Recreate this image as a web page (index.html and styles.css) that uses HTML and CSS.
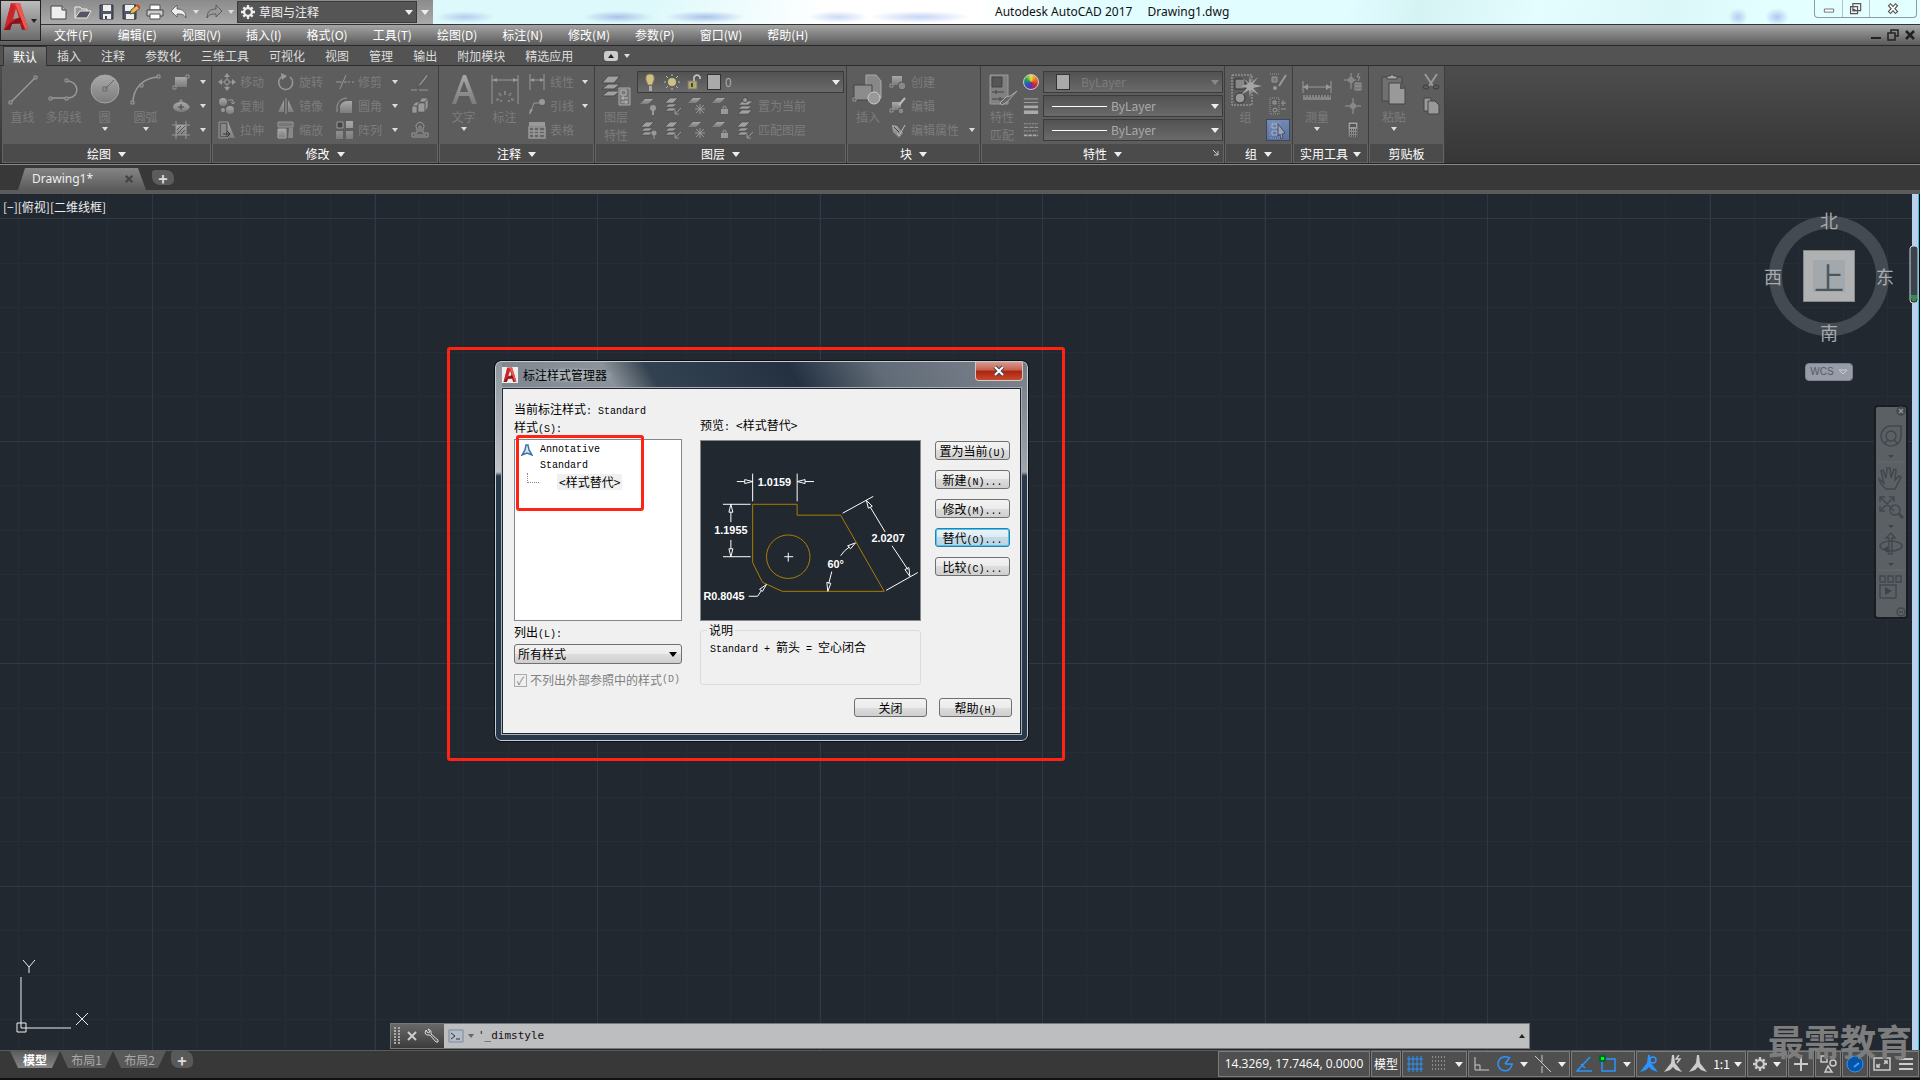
FILE: index.html
```html
<!DOCTYPE html>
<html lang="zh-CN">
  <head>
    <meta charset="UTF-8" />
    <meta name="viewport" content="width=device-width, initial-scale=1.0" />
    <title>Autodesk AutoCAD 2017 - Drawing1.dwg</title>
    <link rel="stylesheet" href="styles.css" />
  </head>
  <body>
    <!-- Icon sprite -->
    <svg class="sprite" aria-hidden="true">
      <defs>
        <linearGradient id="red" x1="0" y1="0" x2="1" y2="1">
          <stop offset="0" stop-color="#f0433f" />
          <stop offset="1" stop-color="#8f0f14" />
        </linearGradient>
        <linearGradient id="metal" x1="0" y1="0" x2="0" y2="1">
          <stop offset="0" stop-color="#a8a8a8" />
          <stop offset="1" stop-color="#7c7c7c" />
        </linearGradient>
      </defs>
      <symbol id="i-logo" viewBox="0 0 26 30">
        <path d="M1 28 8 1h9l8 26-6 1-2-6H9l-2 6zM10 17l6-1-3-9z" fill="url(#red)" fill-rule="evenodd" />
        <path d="m8 1 4 4-4 15-7 8z" fill="#c9252b" />
        <path d="m7 21 10-6 3 5-11 2-2 6-6 0z" fill="#8a1318" />
        <path d="m12 1 5 0 8 26-3 0z" fill="#ee5a50" />
      </symbol>
      <symbol id="i-new" viewBox="0 0 18 16">
        <path d="M1 2h11l4 4v9H1z" fill="#eee" stroke="#444" /><path d="M12 2v4h4" fill="#bbb" stroke="#444" />
      </symbol>
      <symbol id="i-open" viewBox="0 0 18 16">
        <path d="M1 14V3h5l2 2h5v3" fill="#999" stroke="#eee" /><path d="m1 14 5-7h11l-4 7z" fill="#556" stroke="#eee" />
      </symbol>
      <symbol id="i-save" viewBox="0 0 18 16">
        <path d="M2 1h13v14H2z" fill="#505766" stroke="#30343c" /><path d="M5 1h8v6H5zM5 10h8v5H5z" fill="#eee" /><path d="M7 12h2v3H7z" fill="#445" />
      </symbol>
      <symbol id="i-saveas" viewBox="0 0 18 16">
        <path d="M1 1h13v14H1z" fill="#505766" stroke="#30343c" /><path d="M3 1h9v6H3zM4 10h8v5H4z" fill="#eee" />
        <path d="m8 10 1-4 6-5 3 3-6 5z" fill="#e8b64a" stroke="#554" /><path d="m15 1 3 3" stroke="#d33" stroke-width="2" />
      </symbol>
      <symbol id="i-print" viewBox="0 0 18 16">
        <path d="M4 1h10v5H4z" fill="#fff" stroke="#555" /><path d="M1 6h16v6H1z" fill="#ccc" stroke="#444" /><path d="M4 10h10v5H4z" fill="#fff" stroke="#555" />
      </symbol>
      <symbol id="i-undo" viewBox="0 0 18 16">
        <path d="m1 7 6-6v4c6 0 9 3 9 9-2-4-5-4-9-4v3z" fill="currentColor" stroke="#444" stroke-width=".7" />
      </symbol>
      <symbol id="i-gear" viewBox="0 0 18 18">
        <circle cx="9" cy="9" r="5" fill="none" stroke="currentColor" stroke-width="3" />
        <path d="M9 0v4M9 14v4M0 9h4M14 9h4M3 3l2 2M13 13l2 2M15 3l-2 2M5 13l-2 2" stroke="currentColor" stroke-width="3" />
      </symbol>
      <symbol id="i-line" viewBox="0 0 32 32">
        <path d="M4 28 28 4" stroke="currentColor" stroke-width="1.5" /><path d="M2 27h3v3H2zM27 2h3v3h-3z" fill="#666" stroke="currentColor" />
      </symbol>
      <symbol id="i-pline" viewBox="0 0 32 32">
        <path d="M3 24h17c13-1 11-17-1-17" fill="none" stroke="currentColor" stroke-width="1.5" />
        <path d="M1 23h3v3H1zM17 5h3v3h-3zM17 23h3v3h-3z" fill="#666" stroke="currentColor" />
      </symbol>
      <symbol id="i-circle" viewBox="0 0 32 32">
        <circle cx="16" cy="15" r="14" fill="url(#metal)" stroke="#a6a6a6" /><path d="m16 15 9-9M14 13h4v4h-4z" fill="none" stroke="#666" />
      </symbol>
      <symbol id="i-arc" viewBox="0 0 32 32">
        <path d="M3 29C3 14 13 4 28 3" fill="none" stroke="currentColor" stroke-width="1.5" />
        <path d="M1 27h3v3H1zM10 10h3v3h-3zM27 1h3v3h-3z" fill="#666" stroke="currentColor" />
      </symbol>
      <symbol id="i-rect" viewBox="0 0 18 18">
        <path d="M3 4h12v10H3z" fill="url(#metal)" /><path d="M1 13h3v3H1zM14 2h3v3h-3z" fill="#555" stroke="currentColor" />
      </symbol>
      <symbol id="i-ellipse" viewBox="0 0 18 18">
        <ellipse cx="9" cy="10" rx="8" ry="5" fill="url(#metal)" /><path d="M9 7v6M6 10h6" stroke="#444" /><path d="M8 3h2v2H8zM15 9h2v2h-2z" fill="none" stroke="currentColor" />
      </symbol>
      <symbol id="i-hatch" viewBox="0 0 18 18">
        <path d="M4 4h10v10H4z" fill="url(#metal)" /><path d="M4 0v18M14 0v18M0 4h18M0 14h18" stroke="currentColor" fill="none" />
        <path d="m5 13 8-8M5 9l4-4M9 13l4-4" stroke="#555" />
      </symbol>
      <symbol id="i-move" viewBox="0 0 18 18">
        <path d="m9 0 3 4H6zM9 18l3-4H6zM0 9l4-3v6zM18 9l-4-3v6z" fill="currentColor" /><path d="M9 3v12M3 9h12" stroke="currentColor" /><path d="M7 7h4v4H7z" fill="#555" stroke="currentColor" />
      </symbol>
      <symbol id="i-rotate" viewBox="0 0 18 18">
        <path d="M6 3a7 7 0 1 0 7 1" fill="none" stroke="currentColor" stroke-width="1.5" /><path d="m4 0 6 3-5 4z" fill="currentColor" />
      </symbol>
      <symbol id="i-trim" viewBox="0 0 18 18">
        <path d="M0 9h6M8 9h3M12 9h2M16 9h2M4 16l6-14" fill="none" stroke="currentColor" />
      </symbol>
      <symbol id="i-copy2" viewBox="0 0 18 18">
        <circle cx="5" cy="5" r="4" fill="url(#metal)" /><circle cx="12" cy="13" r="4" fill="url(#metal)" /><circle cx="5" cy="13" r="2" fill="currentColor" /><path d="M10 3h5v4m-2-2 2 2 2-2" fill="none" stroke="currentColor" />
      </symbol>
      <symbol id="i-mirror" viewBox="0 0 18 18">
        <path d="M7 3v12H1zM11 3v12h6z" fill="url(#metal)" /><path d="M9 1v16" stroke="currentColor" />
      </symbol>
      <symbol id="i-fillet" viewBox="0 0 18 18">
        <path d="M4 16V9q2-5 8-5h4v12z" fill="url(#metal)" /><path d="M1 15V9q2-8 10-8" fill="none" stroke="currentColor" />
      </symbol>
      <symbol id="i-stretch" viewBox="0 0 18 18">
        <path d="M1 1h9v16H1z" fill="none" stroke="currentColor" /><path d="M10 1v16h7z" fill="url(#metal)" /><path d="M3 3h5v12H3z" fill="#888" /><path d="M5 13h7m-3-3 3 3-3 3" fill="none" stroke="#333" />
      </symbol>
      <symbol id="i-scale" viewBox="0 0 18 18">
        <path d="M1 1h15v5H1z" fill="#777" stroke="currentColor" /><path d="M1 8h8v9H1z" fill="url(#metal)" stroke="#aaa" /><path d="M12 7h4v10h-5" fill="#888" />
      </symbol>
      <symbol id="i-array" viewBox="0 0 18 18">
        <path d="M1 1h6v6H1z" fill="#444" stroke="currentColor" /><path d="M10 0h7v7h-7zM0 10h7v8H0zM10 10h7v8h-7z" fill="url(#metal)" />
      </symbol>
      <symbol id="i-brush" viewBox="0 0 18 18">
        <path d="m16 1-7 9-3 4 4-2 7-9z" fill="currentColor" stroke="#444" stroke-width=".6" /><path d="M0 17h6M8 17h9" stroke="currentColor" />
      </symbol>
      <symbol id="i-box" viewBox="0 0 18 18">
        <path d="M1 9h5v7H1zM1 9l4-4h5L6 9zM8 5l3-4h6l-3 4zM7 6h7v9H7zM14 5l3-4v9l-3 5z" fill="#999" stroke="#555" stroke-width=".6" />
      </symbol>
      <symbol id="i-offset" viewBox="0 0 18 18">
        <path d="M1 16h16v-4h-5V8a4 4 0 1 0-6 0v4H1z" fill="none" stroke="currentColor" /><path d="M3 14h12M8 11V6a1 1 0 1 1 2 0v5" fill="none" stroke="currentColor" />
      </symbol>
      <symbol id="i-text" viewBox="0 0 32 32">
        <path d="M4 30 15 1h3l11 29h-5l-3-8H11l-3 8zM12 18h8L16 7z" fill="url(#metal)" fill-rule="evenodd" />
      </symbol>
      <symbol id="i-dim" viewBox="0 0 32 32">
        <path d="M3 1v29M29 1v29M3 6h26" stroke="currentColor" fill="none" /><path d="m3 6 5-2v4zM29 6l-5-2v4z" fill="currentColor" />
        <path d="M16 17v4M10 19l2 3M22 19l-2 3M7 26l3-1M25 26l-3-1M12 28v-2M20 28v-2" stroke="#808080" stroke-width="2" />
      </symbol>
      <symbol id="i-linear" viewBox="0 0 18 18">
        <path d="M2 1v16M16 1v16M2 7h14" stroke="currentColor" /><path d="m2 7 4-2v4zM16 7l-4-2v4z" fill="currentColor" />
      </symbol>
      <symbol id="i-leader" viewBox="0 0 18 18">
        <circle cx="14" cy="5" r="3" fill="currentColor" /><path d="M2 17 6 6h5" fill="none" stroke="currentColor" /><path d="m1 17 1-5 3 1z" fill="currentColor" />
      </symbol>
      <symbol id="i-table" viewBox="0 0 18 18">
        <path d="M1 1h16v16H1z" fill="#666" /><path d="M1 1h16v4H1z" fill="currentColor" /><path d="M1 6h16v11H1zM6 6v11M11 6v11M1 10h16M1 13h16" fill="none" stroke="currentColor" stroke-width="1.5" />
      </symbol>
      <symbol id="i-layers" viewBox="0 0 32 32">
        <path d="m2 9 6-7h12l-6 7zM2 15l6-5h12l-6 5zM2 22l6-5h12l-6 5z" fill="#a0a0a0" stroke="#4a4a4a" />
        <path d="M19 14h11v17H19z" fill="#777" stroke="#aaa" /><path d="M21 16h5v5h-5zM21 24h7M21 28h7M23 22v4M26 26v4" fill="none" stroke="#bbb" />
      </symbol>
      <symbol id="i-lay" viewBox="0 0 18 18">
        <path d="m1 6 5-5h8L9 6zM1 10l4-3h8l-4 3zM1 14l4-3h8l-4 3z" fill="#a0a0a0" stroke="#4a4a4a" stroke-width=".6" /><circle cx="14" cy="12" r="2.500" fill="currentColor" /><path d="M14 14v4" stroke="currentColor" />
      </symbol>
      <symbol id="i-layset" viewBox="0 0 18 18">
        <path d="m2 8 5-4h10l-5 4zM2 12l4-3h10l-4 3zM2 17l4-4h10l-4 4z" fill="#a0a0a0" stroke="#4a4a4a" stroke-width=".6" /><circle cx="9" cy="3" r="2.500" fill="currentColor" stroke="#4a4a4a" />
      </symbol>
      <symbol id="i-lay1" viewBox="0 0 18 18">
        <path d="m0 7 5-5h8L8 7z" fill="url(#metal)" /><circle cx="13" cy="11" r="3" fill="currentColor" /><path d="M13 12v6" stroke="currentColor" stroke-width="2" />
      </symbol>
      <symbol id="i-lay2" viewBox="0 0 18 18">
        <path d="m1 6 5-5h8L9 6zM1 10l4-3h8l-4 3zM1 14l4-3h8l-4 3z" fill="#a0a0a0" stroke="#4a4a4a" stroke-width=".6" /><path d="m17 11-6 6m0-4v4h4" fill="none" stroke="currentColor" />
      </symbol>
      <symbol id="i-laysun" viewBox="0 0 18 18">
        <path d="m0 6 5-5h8L8 6z" fill="url(#metal)" /><path d="M12 7v10M7 12h10M8 8l8 8M16 8l-8 8" stroke="currentColor" />
      </symbol>
      <symbol id="i-laylock" viewBox="0 0 18 18">
        <path d="m0 6 5-5h8L8 6z" fill="url(#metal)" /><path d="M9 12h7v5H9z" fill="currentColor" /><path d="M11 12v-2q1-2 3 0v2" fill="none" stroke="currentColor" />
      </symbol>
      <symbol id="i-insert" viewBox="0 0 32 32">
        <path d="M14 1h10l5 6v17H14z" fill="#888" stroke="#aaa" /><path d="M2 11h18v15H2z" fill="#8c8c8c" stroke="#444" /><circle cx="22" cy="24" r="6" fill="#999" stroke="#ccc" /><path d="M1 24h3v3H1z" fill="#555" stroke="currentColor" />
      </symbol>
      <symbol id="i-create" viewBox="0 0 18 18">
        <path d="M3 3h10v9H3z" fill="url(#metal)" /><circle cx="13" cy="13" r="4" fill="#888" stroke="#555" /><path d="M1 11h3v3H1z" fill="#555" stroke="currentColor" />
      </symbol>
      <symbol id="i-bedit" viewBox="0 0 18 18">
        <path d="M3 5h9v8H3z" fill="url(#metal)" /><circle cx="12" cy="14" r="3" fill="#888" stroke="#555" /><path d="M1 12h3v3H1z" fill="#555" stroke="currentColor" /><path d="m10 8 6-7" stroke="#bbb" stroke-width="2" />
      </symbol>
      <symbol id="i-attr" viewBox="0 0 18 18">
        <path d="m3 4 5 1 6 7-4 5-6-6z" fill="url(#metal)" /><path d="m8 12 2 3 6-11" fill="none" stroke="#bbb" /><path d="m5 6 5 5" stroke="#444" />
      </symbol>
      <symbol id="i-match" viewBox="0 0 32 32">
        <path d="M4 1h18v29H4z" fill="#808080" stroke="#999" /><path d="M6 3h10v10H6z" fill="#555" stroke="#444" /><path d="M6 18h12M6 25h12M10 16v4M14 23v4" stroke="#444" /><path d="m31 17-9 10-6 4-2-2 6-6 4-1z" fill="#666" stroke="#aaa" />
      </symbol>
      <symbol id="i-weights" viewBox="0 0 18 18">
        <path d="M1 1h16M1 5h16" stroke="#aaa" /><path d="M1 10h16" stroke="#aaa" stroke-width="3" /><path d="M1 16h16" stroke="#aaa" stroke-width="4" />
      </symbol>
      <symbol id="i-types" viewBox="0 0 18 18">
        <path d="M1 2h16M1 10h16" stroke="#aaa" stroke-dasharray="2 1" /><path d="M1 6h16" stroke="#aaa" stroke-dasharray="5 1" /><path d="M1 15h16" stroke="#aaa" stroke-width="2" stroke-dasharray="4 1" />
      </symbol>
      <symbol id="i-group" viewBox="0 0 32 32">
        <path d="M2 1h20v30H2z" fill="none" stroke="#aaa" stroke-dasharray="2 1" /><path d="M5 5h10v10H5z" fill="#888" stroke="#333" /><circle cx="10" cy="24" r="5" fill="#999" stroke="#333" />
        <path d="m20 1 1 8 7-6-5 7 9 2-9 2 6 7-8-5-1 8-1-8-8 5 6-7-6-2 7-2-6-7 7 6z" fill="#a6a6a6" />
      </symbol>
      <symbol id="i-gedit" viewBox="0 0 18 18">
        <path d="M1 1h10" stroke="currentColor" stroke-dasharray="1 1" /><path d="M3 4h5v5H3z" fill="#777" stroke="currentColor" /><circle cx="6" cy="15" r="2" fill="currentColor" /><path d="M17 2 10 13" stroke="currentColor" stroke-width="2" />
      </symbol>
      <symbol id="i-gadd" viewBox="0 0 18 18">
        <path d="M1 1h9v16H1z" fill="none" stroke="currentColor" stroke-dasharray="1 1" /><path d="M4 4h3v3H4z" fill="#777" stroke="currentColor" /><circle cx="6" cy="13" r="2" fill="none" stroke="currentColor" /><path d="M12 6h5M14 3v6M12 12h5" stroke="currentColor" />
      </symbol>
      <symbol id="i-gsel" viewBox="0 0 18 18">
        <path d="M1 1h10v16H1z" fill="none" stroke="#8f9fbd" stroke-dasharray="1 1" /><path d="M3 3h5v4H3zM3 10h5v4H3z" fill="none" stroke="#a9b6ce" /><path d="m9 3 7 9-3 1 1 4-2 1-1-5-2 2z" fill="#99a4b8" stroke="#334" stroke-width=".7" />
      </symbol>
      <symbol id="i-measure" viewBox="0 0 32 32">
        <path d="M2 7v12M30 7v12M2 13h28" stroke="currentColor" /><path d="m2 13 5-3v6zM30 13l-5-3v6z" fill="currentColor" /><path d="M2 21h28v5H2z" fill="#858585" /><path d="M4 22h25" stroke="#555" stroke-width="2" stroke-dasharray="1 2" />
      </symbol>
      <symbol id="i-quick" viewBox="0 0 18 18">
        <path d="M7 0v16M0 7h12M5 5h4v4H5z" fill="#555" stroke="currentColor" /><path d="M11 10h6v7h-6zM13 10v7M15 10v7M11 13h6" fill="none" stroke="currentColor" /><path d="m15 0-2 4h3l-2 4" fill="none" stroke="currentColor" />
      </symbol>
      <symbol id="i-point" viewBox="0 0 18 18">
        <path d="M9 1v16M1 9h16M7 7h4v4H7z" fill="#555" stroke="currentColor" />
      </symbol>
      <symbol id="i-calc" viewBox="0 0 18 18">
        <path d="M4 1h10v16H4z" fill="url(#metal)" stroke="#555" /><path d="M6 3h6v3H6z" fill="#555" /><path d="M6 9h7M6 12h7M6 15h7" stroke="#444" stroke-width="1.500" stroke-dasharray="1 1" />
      </symbol>
      <symbol id="i-paste" viewBox="0 0 32 32">
        <path d="M4 3h20v24H4z" fill="#707070" stroke="#444" /><path d="M9 4V2h3q2-3 4 0h3v3H9z" fill="#aaa" stroke="#444" /><path d="M11 9h12l4 5v16H11z" fill="#999" stroke="#444" /><path d="M22 9v6h5z" fill="#555" />
      </symbol>
      <symbol id="i-cut" viewBox="0 0 18 18">
        <path d="m3 1 8 12M15 1 7 13" stroke="currentColor" stroke-width="2" /><ellipse cx="4" cy="14" rx="3" ry="2" fill="none" stroke="#3c3c3c" /><ellipse cx="14" cy="14" rx="3" ry="2" fill="none" stroke="#3c3c3c" />
      </symbol>
      <symbol id="i-copyclip" viewBox="0 0 18 18">
        <path d="M2 1h7v13H2z" fill="#999" stroke="#444" /><path d="M6 4h7l4 4v9H6z" fill="#999" stroke="#444" />
      </symbol>
      <symbol id="i-bulb" viewBox="0 0 18 18">
        <path d="M9 1q5 0 4 6l-2 5H7L5 7q-1-6 4-6" fill="#cfc088" stroke="#8a8259" /><path d="M8 13h3v5H8z" fill="#aaa" />
      </symbol>
      <symbol id="i-sun" viewBox="0 0 18 18">
        <circle cx="9" cy="9" r="4" fill="#cfc088" /><path d="M9 1v2M9 15v2M1 9h2M15 9h2M3 3l2 2M13 13l2 2M15 3l-2 2M5 13l-2 2" stroke="#bbb" />
      </symbol>
      <symbol id="i-unlock" viewBox="0 0 18 18">
        <path d="M3 8h9v8H3z" fill="#b5a969" stroke="#777" /><path d="M9 8V4q3-4 6 0v2" fill="none" stroke="#ccc" stroke-width="1.500" /><path d="M7 10v4" stroke="#444" stroke-width="2" />
      </symbol>
      <symbol id="i-annot" viewBox="0 0 18 18">
        <path d="M8 0h2l1 8 7 9-6-2-3-3-3 3-6 2 7-9z" fill="currentColor" />
      </symbol>
      <symbol id="i-win" viewBox="0 0 18 18">
        <path d="M5 2h10v9H5zM2 6h9v9H2z" fill="#f4f4f4" stroke="#555" stroke-width="1.500" /><path d="M5 9h3v3H5z" fill="#555" />
      </symbol>
      <symbol id="i-x" viewBox="0 0 12 12">
        <path d="m2 2 8 8M10 2l-8 8" stroke="currentColor" stroke-width="2.500" />
      </symbol>
    </svg>

    <header class="titlebar">
      <div class="quick-access">
        <button aria-label="新建"><svg><use href="#i-new" /></svg></button>
        <button aria-label="打开"><svg><use href="#i-open" /></svg></button>
        <button aria-label="保存"><svg><use href="#i-save" /></svg></button>
        <button aria-label="另存为"><svg><use href="#i-saveas" /></svg></button>
        <button aria-label="打印"><svg><use href="#i-print" /></svg></button>
        <button aria-label="放弃"><svg><use href="#i-undo" /></svg><i class="caret"></i></button>
        <button aria-label="重做" class="redo"><svg><use href="#i-undo" /></svg><i class="caret"></i></button>
        <div class="combo workspace">
          <svg><use href="#i-gear" /></svg>
          <select aria-label="工作空间"><option>草图与注释</option></select>
          <i class="caret big"></i>
        </div>
        <button class="qa-more" aria-label="自定义"><i class="caret big"></i></button>
      </div>
      <h1>Autodesk AutoCAD 2017 <span>Drawing1.dwg</span></h1>
      <div class="window-buttons">
        <button aria-label="最小化"><svg viewBox="0 0 18 18"><path d="M3 9h12v4H3z" fill="#fff" stroke="#555" /></svg></button>
        <button aria-label="还原"><svg><use href="#i-win" /></svg></button>
        <button aria-label="关闭"><svg viewBox="0 0 18 18"><path d="m4 3 10 11M14 3 4 14" stroke="#555" stroke-width="5" /><path d="m5 4 8 9M13 4 5 13" stroke="#fff" stroke-width="2" /></svg></button>
      </div>
    </header>
    <button class="app-button" aria-label="应用程序菜单"><svg><use href="#i-logo" /></svg><i class="caret"></i></button>

    <nav class="menubar">
      <button>文件(F)</button>
      <button>编辑(E)</button>
      <button>视图(V)</button>
      <button>插入(I)</button>
      <button>格式(O)</button>
      <button>工具(T)</button>
      <button>绘图(D)</button>
      <button>标注(N)</button>
      <button>修改(M)</button>
      <button>参数(P)</button>
      <button>窗口(W)</button>
      <button>帮助(H)</button>
      <div class="doc-buttons">
        <svg viewBox="0 0 12 12"><path d="M1 9h10" stroke="#222" stroke-width="2" /></svg>
        <svg viewBox="0 0 12 12"><path d="M4 4V1h7v6H8M1 4h7v7H1z" fill="none" stroke="#222" stroke-width="1.500" /></svg>
        <svg><use href="#i-x" /></svg>
      </div>
    </nav>

    <nav class="ribbon-tabs">
      <button class="active">默认</button>
      <button>插入</button>
      <button>注释</button>
      <button>参数化</button>
      <button>三维工具</button>
      <button>可视化</button>
      <button>视图</button>
      <button>管理</button>
      <button>输出</button>
      <button>附加模块</button>
      <button>精选应用</button>
      <button class="ribbon-toggle" aria-label="最小化功能区"><span><i class="caret up"></i></span><i class="caret"></i></button>
    </nav>

    <div class="ribbon">
      <section class="panel p-draw">
        <div class="panel-body">
          <button class="large"><svg><use href="#i-line" /></svg>直线</button>
          <button class="large"><svg><use href="#i-pline" /></svg>多段线</button>
          <button class="large"><svg><use href="#i-circle" /></svg>圆<i class="caret"></i></button>
          <button class="large"><svg><use href="#i-arc" /></svg>圆弧<i class="caret"></i></button>
          <div class="stack">
            <button aria-label="矩形"><svg><use href="#i-rect" /></svg><i class="caret"></i></button>
            <button aria-label="椭圆"><svg><use href="#i-ellipse" /></svg><i class="caret"></i></button>
            <button aria-label="图案填充"><svg><use href="#i-hatch" /></svg><i class="caret"></i></button>
          </div>
        </div>
        <h2>绘图<i class="caret big"></i></h2>
      </section>

      <section class="panel p-modify">
        <div class="panel-body">
          <div class="stack">
            <button><svg><use href="#i-move" /></svg>移动</button>
            <button><svg><use href="#i-copy2" /></svg>复制</button>
            <button><svg><use href="#i-stretch" /></svg>拉伸</button>
          </div>
          <div class="stack">
            <button><svg><use href="#i-rotate" /></svg>旋转</button>
            <button><svg><use href="#i-mirror" /></svg>镜像</button>
            <button><svg><use href="#i-scale" /></svg>缩放</button>
          </div>
          <div class="stack">
            <button><svg><use href="#i-trim" /></svg>修剪<i class="caret"></i></button>
            <button><svg><use href="#i-fillet" /></svg>圆角<i class="caret"></i></button>
            <button><svg><use href="#i-array" /></svg>阵列<i class="caret"></i></button>
          </div>
          <div class="stack">
            <button aria-label="删除"><svg><use href="#i-brush" /></svg></button>
            <button aria-label="分解"><svg><use href="#i-box" /></svg></button>
            <button aria-label="偏移"><svg><use href="#i-offset" /></svg></button>
          </div>
        </div>
        <h2>修改<i class="caret big"></i></h2>
      </section>

      <section class="panel p-annotate">
        <div class="panel-body">
          <button class="large"><svg><use href="#i-text" /></svg>文字<i class="caret"></i></button>
          <button class="large"><svg><use href="#i-dim" /></svg>标注</button>
          <div class="stack">
            <button><svg><use href="#i-linear" /></svg>线性<i class="caret"></i></button>
            <button><svg><use href="#i-leader" /></svg>引线<i class="caret"></i></button>
            <button><svg><use href="#i-table" /></svg>表格</button>
          </div>
        </div>
        <h2>注释<i class="caret big"></i></h2>
      </section>

      <section class="panel p-layer">
        <div class="panel-body">
          <button class="large"><svg><use href="#i-layers" /></svg><span>图层<br />特性</span></button>
          <div class="stack">
            <div class="combo">
              <svg><use href="#i-bulb" /></svg>
              <svg><use href="#i-sun" /></svg>
              <svg><use href="#i-unlock" /></svg>
              <span class="swatch"></span>
              <select aria-label="图层"><option>0</option></select>
              <i class="caret big"></i>
            </div>
            <div class="icon-row">
              <button aria-label="关"><svg><use href="#i-lay1" /></svg></button>
              <button aria-label="隔离"><svg><use href="#i-lay2" /></svg></button>
              <button aria-label="冻结"><svg><use href="#i-laysun" /></svg></button>
              <button aria-label="锁定"><svg><use href="#i-laylock" /></svg></button>
              <button><svg><use href="#i-layset" /></svg>置为当前</button>
            </div>
            <div class="icon-row">
              <button aria-label="打开所有图层"><svg><use href="#i-lay" /></svg></button>
              <button aria-label="取消隔离"><svg><use href="#i-lay2" /></svg></button>
              <button aria-label="解冻"><svg><use href="#i-laysun" /></svg></button>
              <button aria-label="解锁"><svg><use href="#i-laylock" /></svg></button>
              <button><svg><use href="#i-lay2" /></svg>匹配图层</button>
            </div>
          </div>
        </div>
        <h2>图层<i class="caret big"></i></h2>
      </section>

      <section class="panel p-block">
        <div class="panel-body">
          <button class="large"><svg><use href="#i-insert" /></svg>插入</button>
          <div class="stack">
            <button><svg><use href="#i-create" /></svg>创建</button>
            <button><svg><use href="#i-bedit" /></svg>编辑</button>
            <button><svg><use href="#i-attr" /></svg>编辑属性<i class="caret"></i></button>
          </div>
        </div>
        <h2>块<i class="caret big"></i></h2>
      </section>

      <section class="panel p-props">
        <div class="panel-body">
          <button class="large"><svg><use href="#i-match" /></svg><span>特性<br />匹配</span></button>
          <div class="stack">
            <div class="prop-row">
              <span class="wheel"></span>
              <div class="combo dim">
                <span class="swatch"></span>
                <select aria-label="对象颜色"><option>ByLayer</option></select>
                <i class="caret big"></i>
              </div>
            </div>
            <div class="prop-row">
              <svg><use href="#i-weights" /></svg>
              <div class="combo">
                <span class="stroke"></span>
                <select aria-label="线宽"><option>ByLayer</option></select>
                <i class="caret big"></i>
              </div>
            </div>
            <div class="prop-row">
              <svg><use href="#i-types" /></svg>
              <div class="combo">
                <span class="stroke"></span>
                <select aria-label="线型"><option>ByLayer</option></select>
                <i class="caret big"></i>
              </div>
            </div>
          </div>
        </div>
        <h2>特性<i class="caret big"></i>
          <svg class="launcher" viewBox="0 0 6 6"><path d="m0 0 5 5M5 1v4H1" fill="none" stroke="#ccc" /></svg>
        </h2>
      </section>

      <section class="panel p-group">
        <div class="panel-body">
          <button class="large"><svg><use href="#i-group" /></svg>组</button>
          <div class="stack">
            <button aria-label="解除编组"><svg><use href="#i-gedit" /></svg></button>
            <button aria-label="组编辑"><svg><use href="#i-gadd" /></svg></button>
            <button aria-label="启用组选择" class="pressed"><svg><use href="#i-gsel" /></svg></button>
          </div>
        </div>
        <h2>组<i class="caret big"></i></h2>
      </section>

      <section class="panel p-utils">
        <div class="panel-body">
          <button class="large"><svg><use href="#i-measure" /></svg>测量<i class="caret"></i></button>
          <div class="stack">
            <button aria-label="快速选择"><svg><use href="#i-quick" /></svg></button>
            <button aria-label="点坐标"><svg><use href="#i-point" /></svg></button>
            <button aria-label="计算器"><svg><use href="#i-calc" /></svg></button>
          </div>
        </div>
        <h2>实用工具<i class="caret big"></i></h2>
      </section>

      <section class="panel p-clip">
        <div class="panel-body">
          <button class="large"><svg><use href="#i-paste" /></svg>粘贴<i class="caret"></i></button>
          <div class="stack">
            <button aria-label="剪切"><svg><use href="#i-cut" /></svg></button>
            <button aria-label="复制剪裁"><svg><use href="#i-copyclip" /></svg></button>
          </div>
        </div>
        <h2>剪贴板</h2>
      </section>
    </div>

    <div class="file-tabs">
      <button class="file-tab">Drawing1* <svg><use href="#i-x" /></svg></button>
      <button class="add-tab" aria-label="新图形">+</button>
    </div>

    <main class="workspace-area">
      <div class="view">
        <svg class="grid-lines"><path class="minor" /><path class="major" /></svg>
        <div class="view-label">[−][俯视][二维线框]</div>

        <svg class="ucs" viewBox="0 0 80 90">
          <path d="M7 23v51h50M3 69h9v9H3z" />
          <path d="m9 6 6 7 6-7M15 13v6M62 59l12 12M74 59 62 71" />
        </svg>

        <div class="viewcube">
          <span class="n">北</span>
          <span class="w">西</span>
          <button class="face"><span>上</span></button>
          <span class="e">东</span>
          <span class="s">南</span>
        </div>
        <button class="wcs">WCS <svg viewBox="0 0 10 6"><path d="M1 1h8L5 5z" fill="none" stroke="#c8ccd6" /></svg></button>

        <svg class="navbar" viewBox="0 0 34 214">
          <rect x="1" y="1" width="32" height="212" rx="3" fill="#5b6064" stroke="#181d23" stroke-width="2" />
          <g fill="none" stroke="#41474f" stroke-width="1.500">
            <circle cx="27" cy="6" r="4" fill="#454b52" /><path d="m25 4 4 4M29 4l-4 4" stroke="#8a8f94" />
            <path d="M17 21h10v10a10 10 0 1 1-10-10z" /><circle cx="17" cy="31" r="5" /><path d="m10 39 4-4M24 39l-4-4" />
            <path d="M12 84q-5-4-7-10l5 4-3-12 2-1 3 8 1-10h3l1 10 3-9 2 1-1 10 4-4 2 1-6 12z" />
            <path d="m6 92 14 14M20 92 6 106M6 97v-5h5M15 92h5v5M6 101v5h5" /><circle cx="21" cy="105" r="5" /><path d="m25 109 4 4" stroke-width="3" />
            <ellipse cx="17" cy="141" rx="11" ry="5" /><path d="M15 149v-16h-3l5-5 4 5h-3v16z" />
            <path d="M6 171h5v6H6zM14 171h5v6h-5zM22 171h5v6h-5zM6 180h16v13H6z" />
            <circle cx="27" cy="207" r="4" /><path d="M25 207h4" />
          </g>
          <path d="M14 50h6l-3 3zM14 120h6l-3 3zM14 158h6l-3 3zM11 182l7 4-7 4zM9 144l5-3v7z" fill="#3d434a" />
          <path d="M4 57h27M4 165h27" stroke="#666b70" />
        </svg>

        <div class="highlight highlight-dialog"></div>

        <div class="dialog" role="dialog" aria-labelledby="dlg-title">
          <div class="dialog-title">
            <svg><use href="#i-logo" /></svg>
            <h2 id="dlg-title">标注样式管理器</h2>
            <button class="dialog-close" aria-label="关闭窗口"><svg viewBox="0 0 12 12"><path d="m2 2 8 8M10 2l-8 8" stroke="#445" stroke-width="4" /><path d="m2 2 8 8M10 2l-8 8" stroke="#fff" stroke-width="2" /></svg></button>
          </div>
          <div class="dialog-body">
            <div class="col-styles">
              <p>当前标注样式<span class="en">: Standard</span></p>
              <p id="style-label">样式<span class="en">(S):</span></p>
              <ul class="style-list" aria-labelledby="style-label">
                <li><svg viewBox="0 0 12 12"><path d="M5 1h2l1 5 3 5-5-2-5 2 3-5z" fill="#dbe8f5" stroke="#3d74aa" stroke-width="1.500" /></svg><span class="en">Annotative</span></li>
                <li><span class="en">Standard</span></li>
                <li class="child"><i></i><mark>&lt;样式替代&gt;</mark></li>
              </ul>
              <label for="list-filter">列出<span class="en">(L):</span></label>
              <div class="select-box">
                <select id="list-filter"><option>所有样式</option></select>
                <i class="caret big"></i>
              </div>
              <label class="check"><input type="checkbox" checked disabled />不列出外部参照中的样式<span class="en">(D)</span></label>
            </div>

            <div class="col-preview">
              <p>预览<span class="en">: </span>&lt;样式替代&gt;</p>
              <svg class="preview" viewBox="0 0 221 181">
                <g class="shape">
                  <path d="M52 64h45v11h44l44 77H82l-20-9-10-20z" />
                  <circle cx="88" cy="117" r="22" />
                </g>
                <g class="dims">
                  <path d="M84 117h9M88 113v9" />
                  <path d="M52 33v28M97 33v28M36 41h8M52 41l-8-2v4zM97 41l8-2v4zM105 41h9" />
                  <path d="M22 64h28M22 117h28M30 72v10M30 64l-2 8h4zM30 117l-2-8h4zM30 109v-9" />
                  <path d="M48 157h9l4-6M66 145l-7 5 3 2z" />
                  <path d="m143 73 31-17M187 151l32-18M171 67l15 25M167 60l2 8 4-2zM193 106l16 24M211 137l-5-7 4-2z" />
                  <path d="M141 116q4-6 9-9M156 103l-8 3 3 3zM132 132l-3 12M128 152l-1-9 4 1z" />
                </g>
                <g class="values">
                  <text x="74" y="45">1.0159</text>
                  <text x="30" y="94">1.1955</text>
                  <text x="23" y="161">R0.8045</text>
                  <text x="136" y="128">60°</text>
                  <text x="189" y="102">2.0207</text>
                </g>
              </svg>
              <fieldset>
                <legend>说明</legend>
                <span class="en">Standard + </span>箭头<span class="en"> = </span>空心闭合
              </fieldset>
            </div>

            <div class="col-actions">
              <button>置为当前<span class="en">(U)</span></button>
              <button>新建<span class="en">(N)...</span></button>
              <button>修改<span class="en">(M)...</span></button>
              <button class="focused">替代<span class="en">(O)...</span></button>
              <button>比较<span class="en">(C)...</span></button>
            </div>

            <div class="dialog-footer">
              <button>关闭</button>
              <button>帮助<span class="en">(H)</span></button>
            </div>
          </div>
          <div class="highlight highlight-styles"></div>
        </div>

        <div class="command-line">
          <div class="command-tools">
            <svg class="grip" viewBox="0 0 6 18"><path d="M1 0v18M5 0v18" stroke="#aaa" stroke-width="2" stroke-dasharray="2 1" /></svg>
            <svg viewBox="0 0 12 12"><path d="m2 2 8 8M10 2l-8 8" stroke="#ccc" stroke-width="2" /></svg>
            <svg class="wrench" viewBox="0 0 16 16"><path d="M2 2 1 5q1 3 5 2l6 7q3 1 2-2L7 6q1-4-3-5l2 3-2 1z" fill="#555" stroke="#ddd" /></svg>
          </div>
          <svg class="prompt" viewBox="0 0 16 14"><path d="M1 1h14v12H1z" fill="#b3bcc9" stroke="#7f8896" /><path d="m3 4 4 3-4 3M8 10h4" fill="none" stroke="#333" /></svg>
          <i class="caret"></i>
          <input type="text" value="'_dimstyle" aria-label="命令" />
          <i class="caret up"></i>
        </div>
      </div>
      <div class="edge"><svg viewBox="0 0 10 60"><rect x="1" y="1" width="8" height="57" rx="3" fill="#3a444c" stroke="#ccd3dc" /><path d="M2 51h6M2 53h6M3 55h4" stroke="#35d04e" /></svg></div>
    </main>

    <footer class="bottom-bar">
      <nav class="layout-tabs">
        <button class="active">模型</button>
        <button>布局1</button>
        <button>布局2</button>
        <button class="add-tab" aria-label="新建布局">+</button>
      </nav>
      <div class="status">
        <div class="coords">14.3269, 17.7464, 0.0000</div>
        <div class="model"><button>模型</button></div>
        <div class="s-grid">
          <button aria-label="栅格" class="on"><svg viewBox="0 0 18 18"><path d="M3 1v16M7 1v16M11 1v16M15 1v16M1 4h16M1 9h16M1 14h16" stroke="currentColor" /></svg></button>
          <button aria-label="捕捉"><svg viewBox="0 0 18 18"><path d="M2 2h15M2 6h15M2 10h15M2 14h15" stroke="currentColor" stroke-dasharray="1 2" /></svg></button>
          <i class="caret big"></i>
        </div>
        <div class="s-track">
          <button aria-label="正交"><svg viewBox="0 0 18 18"><path d="M3 2v13h14M3 10h5v5" fill="none" stroke="currentColor" /></svg></button>
          <button aria-label="极轴" class="on"><svg viewBox="0 0 18 18"><path d="M16 9a7 7 0 1 1-3-6M9 9h8M9 9l5-7" fill="none" stroke="currentColor" stroke-width="1.500" /></svg><i class="caret big"></i></button>
          <button aria-label="等轴测"><svg viewBox="0 0 18 18"><path d="m1 1 16 16M8 0v7M8 11v7" stroke="currentColor" /></svg><i class="caret big"></i></button>
        </div>
        <div class="s-snap">
          <button aria-label="对象追踪" class="on"><svg viewBox="0 0 18 18"><path d="M15 2 2 16h15M6 9l4 4" fill="none" stroke="currentColor" stroke-width="1.500" /></svg></button>
          <button aria-label="对象捕捉" class="on"><svg viewBox="0 0 18 18"><path d="M3 4h13v12H3z" fill="none" stroke="currentColor" stroke-width="1.500" /><path d="M1 1h5v5H1z" fill="#0f0" stroke="#063" stroke-width="2" /></svg><i class="caret big"></i></button>
        </div>
        <div class="s-scale">
          <button aria-label="注释可见性" class="on"><svg viewBox="0 0 18 18"><use href="#i-annot" /><circle cx="13" cy="5" r="3" fill="#4f4f4f" stroke="currentColor" stroke-width="1.500" /></svg></button>
          <button aria-label="自动缩放"><svg viewBox="0 0 18 18"><use href="#i-annot" /><path d="m15 0-3 4h4l-3 4" fill="none" stroke="currentColor" stroke-width="1.500" /></svg></button>
          <button aria-label="注释比例"><svg><use href="#i-annot" /></svg></button>
          <button>1:1<i class="caret big"></i></button>
        </div>
        <div class="s-ws">
          <button aria-label="切换工作空间"><svg class="gear"><use href="#i-gear" /></svg><i class="caret big"></i></button>
        </div>
        <div class="s-one"><button aria-label="注释监视器"><svg viewBox="0 0 18 18"><path d="M9 2v14M2 9h14" stroke="currentColor" stroke-width="2" /></svg></button></div>
        <div class="s-one"><button aria-label="隔离对象"><svg viewBox="0 0 18 18"><path d="M2 1h6v6H2zM6 17l3-6 4 6z" fill="none" stroke="currentColor" stroke-width="1.500" /><circle cx="14" cy="8" r="3" fill="none" stroke="currentColor" stroke-width="1.500" /></svg></button></div>
        <div class="s-one"><button aria-label="硬件加速" class="on"><svg viewBox="0 0 18 18"><circle cx="9" cy="9" r="8" fill="#0556a8" stroke="currentColor" /><path d="m8 12 5-4" stroke="#3ea0ff" stroke-width="2" /></svg></button></div>
        <div class="s-end">
          <button aria-label="全屏显示"><svg viewBox="0 0 18 18"><path d="M1 3h16v12H1zM4 12l3-3M4 9v3h3M14 6l-3 3M11 6h3v3" fill="none" stroke="currentColor" stroke-width="1.500" /></svg></button>
          <button aria-label="自定义状态栏"><svg viewBox="0 0 18 18"><path d="M2 4h14M2 9h14M2 14h14" stroke="currentColor" stroke-width="2" /></svg></button>
        </div>
      </div>
      <div class="watermark">最需教育</div>
    </footer>

    <script>
      // Draw the model space grid, one major line for every five minor ones
      const view = document.querySelector(".view");

      function lines(step, x0, y0) {
        let d = "";
        for (let x = x0; x < view.clientWidth; x += step) {
          d += `M${Math.round(x) + 0.5} 0V${view.clientHeight}`;
        }
        for (let y = y0; y < view.clientHeight; y += step) {
          d += `M0 ${Math.round(y) + 0.5}H${view.clientWidth}`;
        }
        return d;
      }

      function drawGrid() {
        const major = 222.5;
        document.querySelector(".minor").setAttribute("d", lines(major / 5, 18, 24));
        document.querySelector(".major").setAttribute("d", lines(major, 152, 24));
      }

      drawGrid();
      window.addEventListener("resize", drawGrid);
    </script>
  </body>
</html>
```
FILE: styles.css
```css
* {
  margin: 0;
  padding: 0;
  box-sizing: border-box;
}

body {
  height: 100vh;
  display: flex;
  flex-direction: column;
  overflow: hidden;
  position: relative;
  background: #383838;
  color: #eee;
  font-family: "Noto Sans CJK SC", sans-serif;
  font-size: 12px;
  line-height: 18px;
}

button,
select,
input {
  font: inherit;
  color: inherit;
  background: none;
  border: 0;
  border-radius: 0;
}

select {
  appearance: none;
  outline: none;
}

button {
  white-space: nowrap;
}

svg {
  display: block;
  width: 18px;
  height: 18px;
  flex: none;
}

h1,
h2 {
  font-size: 12px;
  font-weight: normal;
}

.sprite {
  position: absolute;
  width: 0;
  height: 0;
}

.caret {
  width: 0;
  height: 0;
  flex: none;
  border: 3px solid transparent;
  border-top: 4px solid #ddd;
  border-bottom: 0;
}

.caret.big {
  border-width: 5px 4px 0;
  border-top-color: #eee;
}

.caret.up {
  border-top: 0;
  border-bottom: 4px solid #222;
}

/* Title bar */
.titlebar {
  height: 24px;
  flex: none;
  display: flex;
  align-items: center;
  position: relative;
  color: #111;
  background:
    radial-gradient(ellipse 30px 6px at 465px 17px, #b4cdee, transparent),
    radial-gradient(ellipse 36px 6px at 618px 17px, #a9c2ea, transparent),
    radial-gradient(ellipse 40px 6px at 705px 17px, #a9c2ea, transparent),
    radial-gradient(ellipse 30px 6px at 838px 17px, #c9daf6, transparent),
    radial-gradient(ellipse 50px 6px at 920px 17px, #c4d6f6, transparent),
    radial-gradient(ellipse 10px 9px at 1738px 17px, #b4cdf2, transparent),
    radial-gradient(ellipse 12px 9px at 1777px 17px, #b0c8f2, transparent),
    linear-gradient(100deg, #def9fb 34%, #fff 43% 51%, #e1fdff 57% 70%, #d6f3f4 74%, #e4fdff 80%, #dcf7f8 87%, #e4ffff 92%);
}

.quick-access {
  height: 24px;
  display: flex;
  align-items: center;
  padding-left: 47px;
  color: #eee;
  background: linear-gradient(#8b8b8b, #aaa);
}

.quick-access > button {
  height: 24px;
  padding: 0 3px;
  display: flex;
  align-items: center;
  gap: 5px;
}

.quick-access .redo {
  color: #999;
}

.quick-access .redo svg {
  transform: scaleX(-1);
}

.combo {
  height: 22px;
  display: flex;
  align-items: center;
  gap: 4px;
  padding: 0 3px;
  border: 1px solid #3b3b3b;
  background: linear-gradient(#525252, #6a6a6a);
}

.combo select {
  flex: 1;
  min-width: 0;
}

.combo.workspace {
  width: 180px;
  background: #555;
}

.workspace svg {
  width: 14px;
  height: 14px;
}

.quick-access .qa-more {
  width: 16px;
  padding: 0 4px;
}

.titlebar h1 {
  position: absolute;
  left: 995px;
  font-family: "Noto Sans", sans-serif;
}

.titlebar h1 span {
  margin-left: 12px;
}

.window-buttons {
  display: flex;
  align-self: flex-start;
  margin: 0 3px 0 auto;
  border: 1px solid #8f9aa0;
  border-top: 0;
  border-radius: 0 0 4px 4px;
}

.window-buttons button {
  width: 27px;
  height: 17px;
  display: flex;
  align-items: center;
  justify-content: center;
  border-left: 1px solid #b4bfc4;
}

.window-buttons button:first-child {
  border-left: 0;
}

.window-buttons button:last-child {
  width: 47px;
}

.window-buttons svg {
  width: 16px;
  height: 14px;
}

.app-button {
  position: absolute;
  left: 0;
  top: 0;
  z-index: 1;
  width: 41px;
  height: 41px;
  display: flex;
  align-items: center;
  gap: 2px;
  padding: 0 2px 8px;
  border: 1px solid #222;
  background: linear-gradient(#bcbcbc, #6b6b6b);
}

.app-button svg {
  width: 26px;
  height: 30px;
}

.app-button .caret {
  margin-top: 8px;
  border-top-color: #222;
}

/* Menu bar */
.menubar {
  height: 22px;
  flex: none;
  display: flex;
  align-items: center;
  gap: 1px;
  padding-left: 42px;
  border-top: 1px solid #333;
  border-bottom: 1px solid #2a2a2a;
  background: linear-gradient(#a5a5a5, #5a5a5a);
  color: #fff;
}

.menubar button {
  padding: 0 12px;
}

.doc-buttons {
  display: flex;
  gap: 5px;
  margin: 0 4px 0 auto;
  color: #222;
}

.doc-buttons svg {
  width: 12px;
  height: 12px;
}

/* Ribbon */
.ribbon-tabs {
  height: 20px;
  flex: none;
  display: flex;
  padding-left: 3px;
  border-bottom: 1px solid #2e2e2e;
  background: #535353;
  color: #ddd;
}

.ribbon-tabs button {
  padding: 0 10px;
}

.ribbon-tabs .active {
  height: 20px;
  padding: 0 9px;
  border: 1px solid #333;
  border-bottom: 0;
  background: linear-gradient(#757575, #5d5d5d);
  color: #fff;
}

.ribbon-tabs .ribbon-toggle {
  display: flex;
  align-items: center;
  gap: 6px;
  margin-left: 11px;
}

.ribbon-toggle span {
  padding: 3px 4px;
  border-radius: 3px;
  background: #ccc;
}

.ribbon-toggle span .caret {
  display: block;
}

.ribbon {
  height: 98px;
  flex: none;
  display: flex;
  padding-left: 2px;
  border-bottom: 1px solid #222;
  background: linear-gradient(#4d4d4d, #363636);
  color: #7c7c7c;
}

.panel {
  display: flex;
  flex-direction: column;
  border-right: 1px solid #3e3e3e;
  background: #5d5d5d;
}

.panel h2 {
  height: 19px;
  display: flex;
  align-items: center;
  justify-content: center;
  gap: 7px;
  position: relative;
  padding-top: 2px;
  background: #4b4b4b;
  border: solid #646464;
  border-width: 0 1px 1px;
  color: #fff;
}

.panel-body {
  flex: 1;
  display: flex;
}

.panel-body svg {
  color: #999;
}

.large {
  width: 41px;
  padding-top: 8px;
  display: flex;
  flex-direction: column;
  align-items: center;
  flex: none;
}

.large svg {
  width: 32px;
  height: 32px;
  margin-bottom: 2px;
}

.large .caret {
  margin-top: 1px;
}

.stack {
  display: grid;
  grid-template-rows: repeat(3, 24px);
  align-items: center;
  padding-top: 4px;
}

.stack > button,
.icon-row,
.icon-row button,
.prop-row {
  display: flex;
  align-items: center;
  gap: 4px;
}

.stack > button .caret {
  margin-left: 6px;
}

.p-draw {
  width: 210px;
}

.p-draw .stack {
  padding-left: 6px;
}

.p-modify {
  width: 227px;
}

.p-modify .panel-body {
  gap: 13px;
  padding-left: 6px;
}

.p-annotate {
  width: 156px;
}

.p-annotate .panel-body {
  padding-left: 4px;
}

.p-annotate .stack {
  padding-left: 3px;
}

.p-annotate .stack > button .caret {
  margin-left: 4px;
}

.p-layer {
  width: 252px;
}

.p-layer .large,
.p-block .large,
.p-props .large {
  width: 42px;
}

.p-layer .combo {
  width: 207px;
  color: #aaa;
}

.swatch {
  width: 14px;
  height: 16px;
  border: 1px solid #333;
  background: #aaa;
}

.icon-row {
  padding-left: 3px;
  gap: 6px;
}

.p-block {
  width: 134px;
}

.p-props {
  width: 244px;
}

.prop-row .combo {
  width: 180px;
  padding: 0 3px 0 8px;
  color: #aaa;
}

.prop-row .dim {
  gap: 11px;
  padding-left: 12px;
  color: #7c7c7c;
}

.prop-row .dim .caret {
  border-top-color: #888;
}

.prop-row > svg,
.wheel {
  width: 16px;
  height: 16px;
}

.wheel {
  flex: none;
  border-radius: 50%;
  border: 1px solid #ccc;
  background: conic-gradient(#e8e04a, #e57722, #d42b2b, #6b2ba8, #2555c8, #2aa54e, #e8e04a);
}

.stroke {
  width: 55px;
  height: 1px;
  background: #fff;
}

.launcher {
  position: absolute;
  right: 4px;
  bottom: 6px;
  width: 6px;
  height: 6px;
}

.p-group {
  width: 68px;
}

.p-utils {
  width: 76px;
}

.p-utils .large {
  width: 48px;
}

.p-utils h2 {
  gap: 5px;
}

.p-clip {
  width: 76px;
}

.p-clip .large {
  width: 50px;
}

.p-group .stack > button,
.p-utils .stack > button,
.p-clip .stack > button {
  width: 24px;
  height: 22px;
  justify-content: center;
}

.stack .pressed {
  border: 1px solid #3a4864;
  background: linear-gradient(#7289b3, #5b719a);
}

/* File tabs */
.file-tabs {
  height: 30px;
  flex: none;
  display: flex;
  align-items: center;
  gap: 6px;
  padding: 0 18px;
  border-top: 1px solid #8a8a8a;
  border-bottom: 4px solid #5b5b5b;
  background: #383838;
}

.file-tab {
  width: 128px;
  height: 22px;
  align-self: flex-end;
  display: flex;
  align-items: center;
  justify-content: space-between;
  padding: 0 12px 0 14px;
  border-radius: 8px 8px 0 0;
  background: linear-gradient(#858585, #5b5b5b);
  clip-path: polygon(7px 0, 120px 0, 100% 100%, 0 100%);
  font-family: "Noto Sans", sans-serif;
}

.file-tab svg {
  width: 10px;
  height: 10px;
  color: #444;
}

.add-tab {
  width: 22px;
  height: 15px;
  border-radius: 3px 8px 5px 8px;
  background: #5c5c5c;
  color: #ddd;
  font-size: 16px;
  font-weight: bold;
  line-height: 14px;
}

/* Model space */
.workspace-area {
  flex: 1;
  min-height: 0;
  display: flex;
}

.view {
  flex: 1;
  position: relative;
  overflow: hidden;
  background: #212830;
}

.edge {
  width: 8px;
  position: relative;
  background: linear-gradient(90deg, #b9d1ec 6px, #22c7e8 6px 7px, #000 7px);
}

.edge svg {
  position: absolute;
  left: -3px;
  top: 51px;
  width: 10px;
  height: 60px;
}

.grid-lines {
  position: absolute;
  width: 100%;
  height: 100%;
  fill: none;
}

.grid-lines .minor {
  stroke: #262d37;
}

.grid-lines .major {
  stroke: #303746;
}

.view-label {
  position: absolute;
  left: 3px;
  top: 4px;
}

.ucs {
  position: absolute;
  left: 14px;
  bottom: 6px;
  width: 80px;
  height: 90px;
  fill: none;
  stroke: #eee;
}

.viewcube {
  position: absolute;
  top: 22px;
  right: 23px;
  width: 120px;
  height: 120px;
  display: grid;
  place-items: center;
  border: 13px solid #444a51;
  border-radius: 50%;
  color: #a8abae;
  font-size: 18px;
}

.viewcube span {
  grid-area: 1 / 1;
}

.viewcube .n {
  transform: translateY(-56px);
}

.viewcube .s {
  transform: translateY(56px);
}

.viewcube .w {
  transform: translateX(-56px);
}

.viewcube .e {
  transform: translateX(56px);
}

.face {
  grid-area: 1 / 1;
  width: 52px;
  height: 52px;
  display: grid;
  place-items: center;
  background: #b0b1b3;
  border: 1px solid #888;
  color: #4e565d;
}

.face span {
  width: 32px;
  height: 32px;
  background: #a2a8ac;
  font-size: 30px;
  line-height: 32px;
}

.wcs {
  position: absolute;
  top: 169px;
  right: 59px;
  width: 48px;
  height: 18px;
  display: flex;
  align-items: center;
  justify-content: space-evenly;
  border: 1px solid #7d8190;
  border-radius: 4px;
  background: #989ba8;
  color: #555a66;
  font-family: "Liberation Sans", sans-serif;
  font-size: 10px;
}

.wcs svg {
  width: 10px;
  height: 6px;
}

.navbar {
  position: absolute;
  top: 211px;
  right: 4px;
  width: 34px;
  height: 214px;
}

/* Red callouts */
.highlight {
  position: absolute;
  border: 3px solid #ff2314;
  border-radius: 3px;
}

.highlight-dialog {
  left: 447px;
  top: 153px;
  width: 618px;
  height: 414px;
}

.highlight-styles {
  left: 20px;
  top: 73px;
  width: 128px;
  height: 76px;
}

/* Dimension style dialog */
.dialog {
  position: absolute;
  left: 495px;
  top: 167px;
  width: 533px;
  padding: 0 6px 6px;
  border: 1px solid #c7ccd1;
  border-radius: 6px;
  outline: 1px solid #0c1015;
  background:
    linear-gradient(180deg, #8d949b, #bdc2c7 110px, transparent 114px) left / 6px 100% no-repeat,
    linear-gradient(180deg, #727a84, #a0a6ac 110px, transparent 114px) right / 6px 100% no-repeat,
    linear-gradient(60deg, #7c858f, #8c939a 22%, #334250 30%, #233141 56%, #616b77 72%, #7c848e) top / 100% 28px no-repeat,
    #27394a;
  color: #000;
}

.dialog-title {
  height: 26px;
  display: flex;
  align-items: center;
}

.dialog-title > svg {
  width: 16px;
  height: 16px;
  background: #eee;
}

.dialog-title h2 {
  margin-left: 5px;
  padding-right: 8px;
  line-height: 16px;
  background: radial-gradient(closest-side, #aeb4ba 40%, transparent);
}

.dialog-close {
  width: 48px;
  height: 19px;
  align-self: flex-start;
  display: grid;
  place-items: center;
  margin: 0 -2px 0 auto;
  border: 1px solid #d9c4c4;
  border-top: 0;
  border-radius: 0 0 4px 4px;
  background: linear-gradient(#d79b90, #c5604f 45%, #ab2410 50%, #c8492c);
}

.dialog-close svg {
  width: 12px;
  height: 12px;
}

.dialog-body {
  display: grid;
  grid-template-columns: 168px 221px 75px;
  column-gap: 18px;
  padding: 11px 11px 16px 11px;
  border: 1px solid #1f2730;
  outline: 1px solid #a8aeb4;
  background: #f0f0f0;
}

.en {
  font-family: "Liberation Mono", monospace;
  font-size: 10px;
  line-height: 10px;
  white-space: pre;
}

.col-styles,
.col-preview,
.col-actions {
  display: flex;
  flex-direction: column;
}

.style-list {
  height: 182px;
  margin-top: 3px;
  padding: 2px 6px;
  border: 1px solid #828790;
  background: #fff;
  list-style: none;
}

.style-list li {
  height: 16px;
  display: flex;
  align-items: center;
  padding-left: 19px;
}

.style-list li:first-child {
  padding-left: 0;
  gap: 7px;
}

.style-list svg {
  width: 12px;
  height: 12px;
}

.style-list .child {
  padding-left: 6px;
}

.child i {
  width: 12px;
  height: 10px;
  margin: 0 18px 8px 0;
  border: 1px dotted #888;
  border-width: 0 0 1px 1px;
}

.child mark {
  padding: 0 2px;
  line-height: 16px;
  background: #f0f0f0;
}

.col-styles > label {
  margin-top: 2px;
}

.select-box {
  height: 20px;
  display: flex;
  align-items: center;
  margin-top: 3px;
  padding: 0 4px 0 3px;
  border: 1px solid #707070;
  border-radius: 3px;
  background: linear-gradient(#f2f2f2, #ebebeb 50%, #ddd 50%, #cfcfcf);
}

.select-box select {
  flex: 1;
}

.select-box .caret {
  border-top-color: #000;
}

.col-styles .check {
  display: flex;
  align-items: center;
  margin-top: 7px;
  color: #808080;
  white-space: nowrap;
}

.check input {
  appearance: none;
  width: 13px;
  height: 13px;
  display: grid;
  place-items: center;
  margin-right: 3px;
  border: 1px solid #aaa;
}

.check input:checked::after {
  content: "✓";
  font-size: 11px;
  line-height: 11px;
}

.col-preview {
  padding-top: 16px;
}

.preview {
  width: 221px;
  height: 181px;
  margin-top: 6px;
  border: 1px solid #888;
  background: #212830;
  fill: none;
}

.preview .shape {
  stroke: #ad7d05;
}

.preview .dims {
  stroke: #fff;
}

.preview .values {
  fill: #fff;
  font: bold 11px "Liberation Sans", sans-serif;
  text-anchor: middle;
}

.col-preview fieldset {
  height: 64px;
  padding: 0 9px;
  border: 1px solid #d3dde5;
  border-radius: 3px;
  line-height: 16px;
}

.col-preview legend {
  margin-left: -3px;
  padding: 0 2px;
  line-height: 18px;
}

.col-actions {
  gap: 10px;
  margin: 41px -4px 0 -4px;
}

.dialog-body button {
  width: 75px;
  height: 19px;
  border: 1px solid #707070;
  border-radius: 3px;
  background: linear-gradient(#f3f3f3, #ebebeb 50%, #ddd 50%, #cfcfcf);
  line-height: 16px;
}

.dialog-body .focused {
  border-color: #2a80a8;
  box-shadow: inset 0 0 0 1px #48c7f4;
  background: linear-gradient(#e8f4fa, #dcebf3 50%, #c5dae6 50%, #bcd3df);
}

.dialog-footer {
  grid-column: 1 / -1;
  display: flex;
  justify-content: flex-end;
  gap: 12px;
  padding: 9px 2px 0 0;
}

.dialog-footer button {
  width: 73px;
}

/* Command line */
.command-line {
  position: absolute;
  left: 390px;
  right: 382px;
  bottom: 1px;
  height: 26px;
  display: flex;
  align-items: center;
  gap: 4px;
  padding-right: 4px;
  border: 1px solid #777;
  background: #bdbec0;
  color: #111;
}

.command-tools {
  height: 100%;
  display: flex;
  align-items: center;
  gap: 6px;
  padding: 0 4px 0 3px;
  background: linear-gradient(#686868, #3c3c3c);
}

.command-tools svg {
  width: 12px;
  height: 12px;
}

.command-tools .grip {
  width: 6px;
  height: 18px;
}

.command-tools .wrench {
  width: 16px;
  height: 16px;
}

.command-line .prompt {
  width: 16px;
  height: 14px;
}

.command-line > .caret {
  border-top-color: #666;
}

.command-line input {
  flex: 1;
  outline: none;
  font-family: "DejaVu Sans Mono", monospace;
  font-size: 11px;
}

/* Layout tabs and status bar */
.bottom-bar {
  height: 30px;
  flex: none;
  display: flex;
  justify-content: space-between;
  align-items: flex-start;
  position: relative;
  border-top: 1px solid #5a5a5a;
  border-bottom: 2px solid #111;
  background: #383838;
}

.layout-tabs {
  display: flex;
  align-items: flex-start;
  padding-left: 10px;
  color: #aaa;
}

.layout-tabs button {
  width: 53px;
  height: 17px;
  background: #595959;
  clip-path: polygon(0 0, 100% 0, calc(100% - 8px) 100%, 8px 100%);
  line-height: 16px;
}

.layout-tabs .active {
  width: 50px;
  background: linear-gradient(#5c5c5c, #858585);
  color: #fff;
  font-weight: bold;
}

.layout-tabs .add-tab {
  width: 22px;
  margin-left: 5px;
  clip-path: none;
  line-height: 14px;
}

.status {
  display: flex;
  gap: 1px;
  padding-right: 1px;
}

.status > div {
  height: 26px;
  display: flex;
  align-items: center;
  justify-content: space-around;
  border: 1px solid #7b7b7b;
  background: #4f4f4f;
  color: #ccc;
}

.status button {
  display: flex;
  align-items: center;
  gap: 6px;
}

.status .on {
  color: #2b95ff;
}

.status .coords {
  width: 152px;
  color: #fff;
  font-family: "Open Sans", sans-serif;
}

.status .model {
  width: 30px;
}

.status .model button {
  color: #fff;
}

.s-grid {
  width: 65px;
}

.s-track {
  width: 102px;
}

.s-snap {
  width: 64px;
}

.s-scale {
  width: 110px;
}

.s-scale button:last-child {
  color: #fff;
  gap: 4px;
}

.s-ws {
  width: 40px;
}

.status .gear {
  width: 14px;
  height: 14px;
}

.s-one {
  width: 26px;
}

.s-end {
  width: 50px;
}

.watermark {
  position: absolute;
  right: 8px;
  bottom: 18px;
  color: #7d7d7d;
  font-size: 36px;
  font-weight: bold;
  line-height: 40px;
}
```
